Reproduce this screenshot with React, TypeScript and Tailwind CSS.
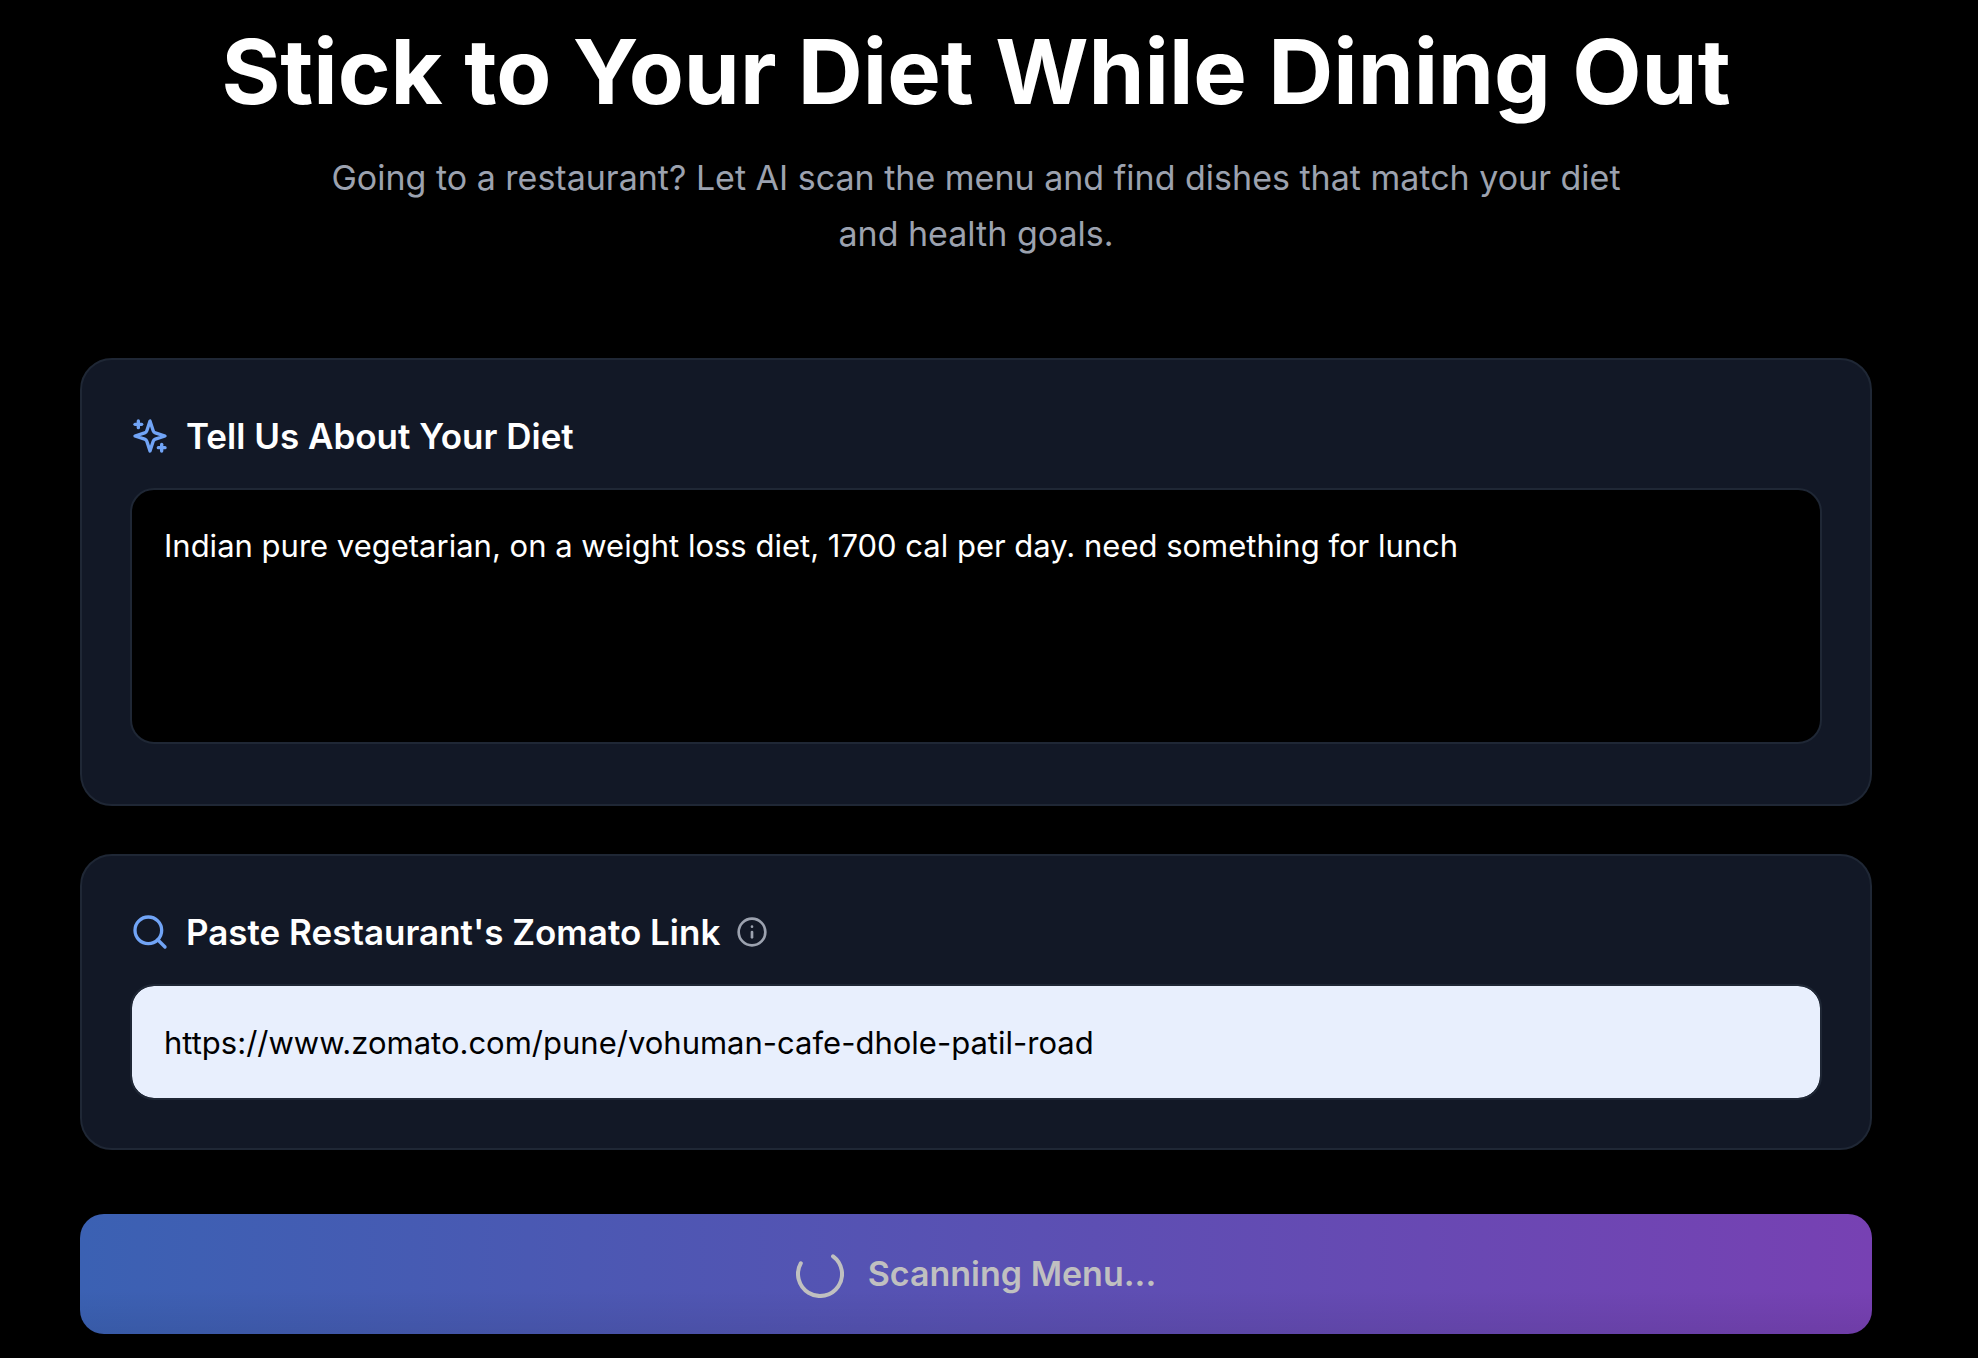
import React from "react";
import { Info, Search } from "lucide-react";

function SparklesIcon({ className }: { className?: string }) {
  return (
    <svg viewBox="0 0 24 24" fill="none" stroke="currentColor" strokeWidth="2" strokeLinecap="round" strokeLinejoin="round" className={className} aria-hidden="true">
      <path d="m12 3-1.912 5.813a2 2 0 0 1-1.275 1.275L3 12l5.813 1.912a2 2 0 0 1 1.275 1.275L12 21l1.912-5.813a2 2 0 0 1 1.275-1.275L21 12l-5.813-1.912a2 2 0 0 1-1.275-1.275L12 3Z" />
      <path d="M5 3v4" />
      <path d="M19 17v4" />
      <path d="M3 5h4" />
      <path d="M17 19h4" />
    </svg>
  );
}

function Spinner({ className }: { className?: string }) {
  return (
    <svg viewBox="0 0 48 48" fill="none" stroke="currentColor" strokeWidth="4" strokeLinecap="round" className={className} aria-hidden="true">
      <path d="M37.1 6.3A22 22 0 1 1 4.8 13.3" />
    </svg>
  );
}

const card = "rounded-[32px] border-2 border-[#1f2735] bg-[#121826] p-12";

export default function App() {
  return (
    <div className="min-h-screen overflow-hidden bg-black pr-[26px] pb-6 font-['Inter','Liberation_Sans',sans-serif] text-white">
      <main className="mx-auto max-w-[1792px]">
        <header className="pt-6 text-center">
          <h1 className="text-[90px] leading-[96px] font-bold">Stick to Your Diet While Dining Out</h1>
          <p className="mx-auto mt-[30px] max-w-[1344px] text-[34px] leading-[56px] text-[#9ca2af]">
            Going to a restaurant? Let AI scan the menu and find dishes that match your diet and health goals.
          </p>
        </header>
        <form className="mt-24" onSubmit={(e) => e.preventDefault()}>
          <section className={card}>
            <label htmlFor="diet" className="mb-6 flex items-center gap-4 text-[35px] leading-[56px] font-semibold">
              <SparklesIcon className="size-10 text-[#71a4f6]" />
              Tell Us About Your Diet
            </label>
            <textarea
              id="diet"
              defaultValue="Indian pure vegetarian, on a weight loss diet, 1700 cal per day. need something for lunch"
              className="mb-3 block h-64 w-full resize-none rounded-3xl border-2 border-[#1f2735] bg-black p-8 text-[31px] leading-[48px] text-white outline-none"
            />
          </section>
          <section className={card + " mt-12"}>
            <div className="mb-6 flex items-center gap-4">
              <label htmlFor="link" className="flex items-center gap-4 text-[35px] leading-[56px] font-semibold">
                <Search className="size-10 text-[#71a4f6]" />
                Paste Restaurant's Zomato Link
              </label>
              <button type="button" aria-label="About Zomato links" className="text-[#9ca2af]">
                <Info className="size-8" />
              </button>
            </div>
            <input
              id="link"
              type="text"
              defaultValue="https://www.zomato.com/pune/vohuman-cafe-dhole-patil-road"
              className="block h-[116px] w-full rounded-3xl border-2 border-[#1f2735] bg-[#e8effd] bg-clip-padding px-8 text-[31px] leading-[48px] text-black outline-none"
            />
          </section>
          <button
            type="submit"
            disabled
            className="mt-16 flex h-[120px] w-full items-center justify-center gap-6 rounded-3xl bg-[linear-gradient(to_top,rgba(0,0,0,0.07),transparent_44px),linear-gradient(to_right,#3b61b3,#7741b3)] text-[34px] leading-[56px] font-semibold text-[#c0c0c0]"
          >
            <Spinner className="size-12" />
            Scanning Menu...
          </button>
        </form>
      </main>
    </div>
  );
}
